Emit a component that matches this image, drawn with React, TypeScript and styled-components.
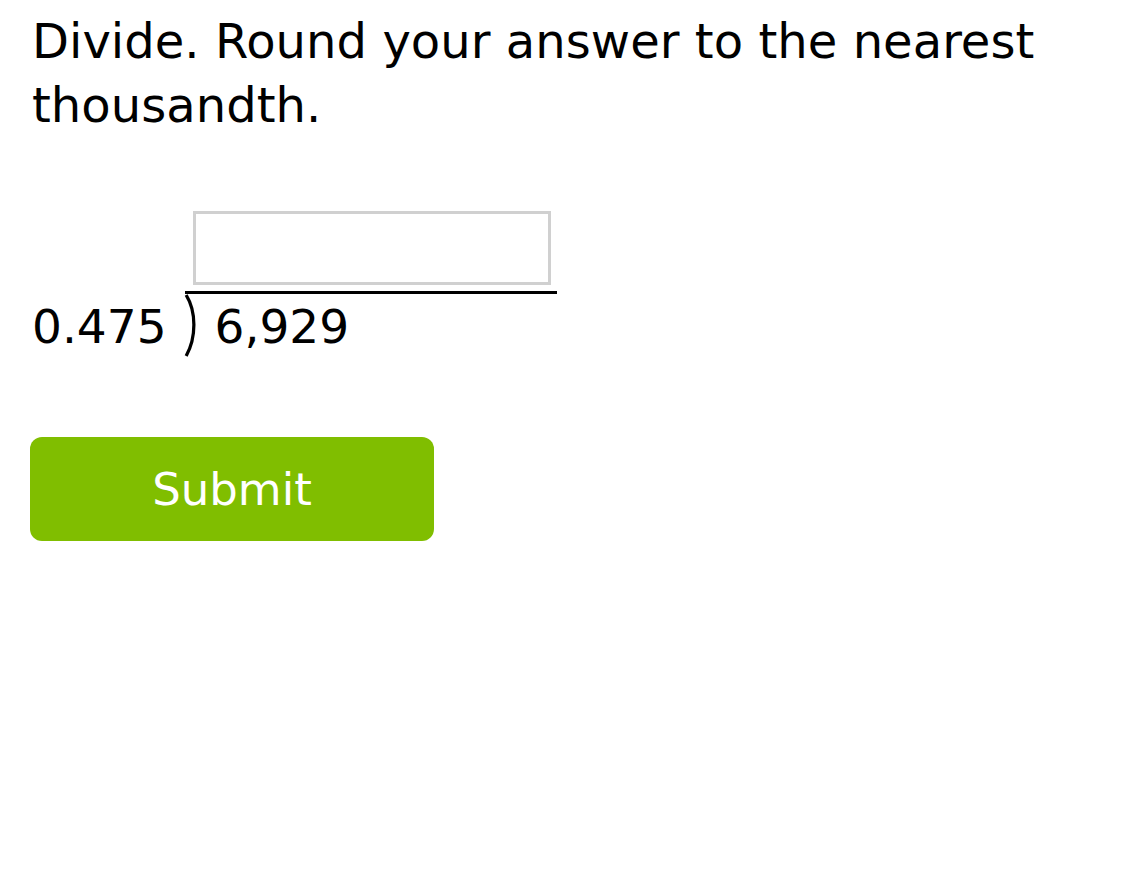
import React from 'react';
import styled, { createGlobalStyle } from 'styled-components';

const GlobalStyle = createGlobalStyle`
  html, body {
    margin: 0;
    padding: 0;
    background: #fff;
  }
  body {
    font-family: "DejaVu Sans", Verdana, sans-serif;
    color: #000;
  }
`;

const App: React.FC = () => {
  return (
    <Page>
      <GlobalStyle />
      <Prompt>Divide. Round your answer to the nearest thousandth.</Prompt>
      <Division>
        <Divisor>0.475</Divisor>
        <Bracket>
          <AnswerBox aria-label="answer" />
          <Dividend>
            <Paren viewBox="0 0 12 64" preserveAspectRatio="none">
              <path d="M2 1 C 11.5 18, 11.5 44, 2 63" fill="none" stroke="#000" strokeWidth="3" />
            </Paren>
            6,929
          </Dividend>
        </Bracket>
      </Division>
      <SubmitButton>Submit</SubmitButton>
    </Page>
  );
};

const Page = styled.div`
  padding: 9px 30px 0 32px;
`;

const Prompt = styled.div`
  font-size: 48px;
  line-height: 64px;
  letter-spacing: 0.05px;
  max-width: 1060px;
`;

const Division = styled.div`
  display: flex;
  align-items: flex-end;
  margin-top: 74px;
`;

const Divisor = styled.div`
  font-size: 47px;
  line-height: 66px;
  padding-right: 18px;
`;

const Bracket = styled.div`
  display: flex;
  flex-direction: column;
  width: 372px;
`;

const AnswerBox = styled.input`
  box-sizing: border-box;
  width: 358px;
  height: 74px;
  margin: 0 0 6px 8px;
  border: 3px solid #d0d0d0;
  background: #fff;
  font-size: 36px;
  outline: none;
`;

const Dividend = styled.div`
  position: relative;
  border-top: 3px solid #000;
  font-size: 47px;
  line-height: 66px;
  padding-left: 30px;
`;

const Paren = styled.svg`
  position: absolute;
  left: -1px;
  top: 0;
  width: 13px;
  height: 63px;
`;

const SubmitButton = styled.button`
  display: block;
  margin-top: 77px;
  margin-left: -2px;
  width: 404px;
  height: 104px;
  border: none;
  border-radius: 12px;
  background: #80be00;
  color: #fff;
  font-family: "DejaVu Sans", Verdana, sans-serif;
  font-size: 45px;
  cursor: pointer;
`;

export default App;
